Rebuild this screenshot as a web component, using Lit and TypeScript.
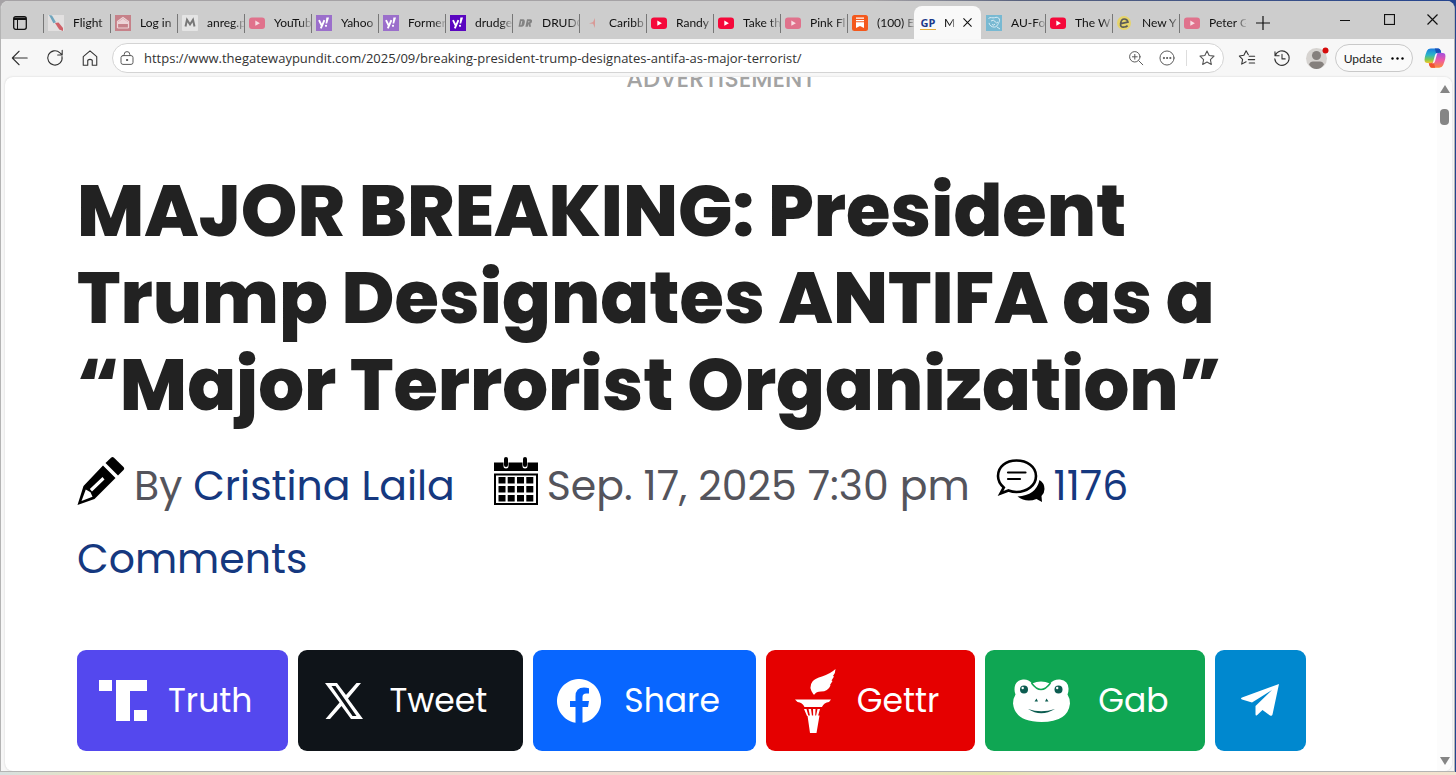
import { LitElement, html, css, svg, nothing, TemplateResult } from "lit";
import { customElement } from "lit/decorators.js";
import { classMap } from "lit/directives/class-map.js";

type Icon = TemplateResult;

const youtube = (faded: boolean): Icon => html`<svg viewBox="0 0 16 16" width="16" height="16">
  <rect x="0" y="2.5" width="16" height="11.5" rx="3" fill=${faded ? "#e0728c" : "#f5083a"} />
  <path d="M6.3 5.6v5.2l4.6-2.6z" fill=${faded ? "#f8dde3" : "#fff"} />
</svg>`;

const yahoo = (color: string): Icon => html`<svg viewBox="0 0 16 16" width="16" height="16">
  <rect width="16" height="16" fill=${color} />
  <path d="M3 5.2l2.6 5.2M8.4 5.2L4.8 13.4" stroke="#fff" stroke-width="1.9" fill="none" />
  <path d="M10.4 2.6h2.6l-1.8 6h-1.6z" fill="#fff" /><circle cx="10" cy="10.8" r="1.1" fill="#fff" />
</svg>`;

const flight = html`<svg viewBox="0 0 16 16" width="16" height="16">
  <rect width="16" height="16" fill="#e2e0e0" />
  <path d="M1 0l3 .6 4 6.600-2.600 1z" fill="#6fa5bd" /><path d="M7 8l3.500-.4 4.500 5.400v3l-3.800-1.400z" fill="#cf6068" />
</svg>`;
const login = html`<svg viewBox="0 0 16 16" width="16" height="16">
  <rect width="16" height="16" fill="#c68189" />
  <path d="M2.500 6.500L8 2.600l5.500 3.900v1h-11zM2.500 8.500h11M2.500 13h11M2.500 8v5M13.500 8v5" fill="none" stroke="#ecd3d6" stroke-width="1.200" />
  <path d="M3 7l5-3.600L13 7z" fill="#ecd3d6" />
</svg>`;
const em = html`<svg viewBox="0 0 16 16" width="16" height="16">
  <rect width="16" height="16" rx="1" fill="#e4e4e4" />
  <path d="M3.500 11.500L5 4.800 8 9.500l3-4.700 1.500 6.700" fill="none" stroke="#777" stroke-width="2" />
</svg>`;
const dr = html`<svg viewBox="0 0 16 16" width="16" height="16">
  <path d="M3 4.200h3.200q2 .3 1.600 3.300-.6 4.300-3.200 4.300H1.500zM10 4.200h3.600q2 .3 1.400 2.500-.4 1.500-1.600 1.800l.6 3.300h-2l-.6-3-.6 3H8.400z" fill="#828282" />
  <path d="M4.800 6l-.9 4.200M12 6l-.3 1.400" stroke="#ccc" stroke-width="1" />
</svg>`;
const carib = html`<svg viewBox="0 0 16 16" width="16" height="16">
  <path d="M11 3L9 7 5 8.500l4 .3L11 13V8z" fill="#d89a97" />
</svg>`;
const substack = html`<svg viewBox="0 0 16 16" width="16" height="16">
  <rect width="16" height="16" rx="2.500" fill="#f4581c" />
  <path d="M4 3.200h8M4 5.600h8" stroke="#fff" stroke-width="1.300" /><path d="M4 7.300h8v5.800L8 10.900l-4 2.200z" fill="#fff" />
</svg>`;
const gp = html`<span class="gp">GP</span>`;
const auf = html`<svg viewBox="0 0 16 16" width="16" height="16">
  <rect width="16" height="16" fill="#78b9d2" />
  <path d="M2.500 3.500c2-2 4 0 6-.8s4-.6 4.800 1.300-.3 3-1 4.500-1.600 3.600-4 3.600-5-1.600-5.300-4.200M5 6q2.500-2 4 .5T12 7M6 9.500q2 1.500 3-.5M11 12l3 2" fill="none" stroke="#d9edf5" stroke-width="1" />
</svg>`;
const ebay = html`<svg viewBox="0 0 16 16" width="16" height="16">
  <circle cx="7" cy="8" r="7" fill="#e6d46a" />
  <path d="M3.800 8.600L11 7.200Q10.400 4 7.300 4T3.600 8.400 7.400 12q2 0 3.200-1.400" fill="none" stroke="#5c5c58" stroke-width="1.700" />
</svg>`;

interface Tab { icon: Icon; label: string; active?: boolean; after?: boolean; }

const tabs: Tab[] = [
  { icon: flight, label: "Flight" },
  { icon: login, label: "Log in" },
  { icon: em, label: "anreg.p" },
  { icon: youtube(true), label: "YouTub" },
  { icon: yahoo("#9b6fcb"), label: "Yahoo" },
  { icon: yahoo("#9b6fcb"), label: "Former" },
  { icon: yahoo("#5a06c0"), label: "drudge" },
  { icon: dr, label: "DRUDG" },
  { icon: carib, label: "Caribb" },
  { icon: youtube(false), label: "Randy" },
  { icon: youtube(false), label: "Take th" },
  { icon: youtube(true), label: "Pink Fl" },
  { icon: substack, label: "(100) E" },
  { icon: gp, label: "M", active: true },
  { icon: auf, label: "AU-Fo", after: true },
  { icon: youtube(false), label: "The W" },
  { icon: ebay, label: "New Y" },
  { icon: youtube(true), label: "Peter G" },
];

const line = (size: number, body: unknown): Icon => html`<svg class="line" viewBox="0 0 20 20" width=${size} height=${size}>${body}</svg>`;

const star = svg`<path d="M10 2.200l2.400 5 5.400.7-4 3.800 1 5.500-4.800-2.700-4.800 2.700 1-5.500-4-3.800 5.400-.7z" />`;

@customElement("browser-tabs")
export class BrowserTabs extends LitElement {
  static styles = css`
    :host { display: flex; height: 38px; background: #cdcdcd; font-family: Lato, "Open Sans", sans-serif; }
    svg { display: block; flex: none; }
    button { border: 0; background: none; padding: 0; font: inherit; color: #111; display: flex; align-items: center; justify-content: center; }
    .line { fill: none; stroke: #111; stroke-width: 1.200; }
    .menu { width: 42px; padding: 5px 4px 0 0; }
    .tabs { display: flex; flex: 0 1 1203px; min-width: 0; }
    .tab { flex: 0 1 67px; min-width: 0; box-sizing: border-box; justify-content: flex-start; gap: 9px; padding: 5px 0 0 5px; font-size: 12px; position: relative; }
    .tab.after { flex-basis: 64px; }
    .tab::before { content: ""; position: absolute; left: 0; top: 13px; bottom: 6px; width: 1px; background: #777; }
    .tab.after::before, .tab.active::before { display: none; }
    .label { flex: 1; min-width: 0; overflow: hidden; white-space: nowrap; text-align: left; -webkit-mask-image: linear-gradient(90deg, #000 70%, transparent 105%); mask-image: linear-gradient(90deg, #000 70%, transparent 105%); }
    .tab.active { background: #f9f9f9; border-radius: 8px 8px 0 0; margin-top: 5px; padding: 0 9px 0 6px; gap: 8px; }
    .gp { flex: none; width: 16px; font: bold 11px/13px "Open Sans", sans-serif; color: #1d3a8a; border-bottom: 1px solid #e0a93a; }
    .new { width: 34px; padding-top: 5px; }
    .space { flex: 1; }
    .win { width: 44px; padding-bottom: 1px; }
    .close { width: 43px; }
  `;
  render() {
    return html`
      <button class="menu" aria-label="Tab actions">
        <svg viewBox="0 0 14 14" width="14" height="14"><rect x=".7" y=".7" width="12.600" height="12.600" rx="2" fill="none" stroke="#111" stroke-width="1.300" /><path d="M1 1.500h12v2.500H1z" fill="#111" /><path d="M4.500 4v9" stroke="#111" /></svg>
      </button>
      <div class="tabs" role="tablist">
        ${tabs.map((t) => html`<button role="tab" class=${classMap({ tab: true, active: !!t.active, after: !!t.after })}>
          ${t.icon}<span class="label">${t.label}</span>
          ${t.active ? html`<svg class="line" viewBox="0 0 10 10" width="9" height="9"><path d="M.5.5l9 9M9.500.5l-9 9" /></svg>` : nothing}
        </button>`)}
      </div>
      <button class="new" aria-label="New tab"><svg class="line" viewBox="0 0 14 14" width="14" height="14"><path d="M7 0v14M0 7h14" /></svg></button>
      <div class="space"></div>
      <button class="win" aria-label="Minimize"><svg class="line" viewBox="0 0 10 10" width="10" height="10"><path d="M0 5.500h10" /></svg></button>
      <button class="win" aria-label="Maximize"><svg class="line" viewBox="0 0 11 11" width="11" height="11"><rect x=".5" y=".5" width="10" height="10" /></svg></button>
      <button class="win close" aria-label="Close"><svg class="line" viewBox="0 0 11 11" width="11" height="11"><path d="M.5.5l10 10M10.500.5l-10 10" /></svg></button>
    `;
  }
}

@customElement("browser-toolbar")
export class BrowserToolbar extends LitElement {
  static styles = css`
    :host { display: flex; align-items: center; height: 38px; background: #f7f7f7; padding: 0 8px 0 1px; font-family: Lato, "Open Sans", sans-serif; }
    svg { display: block; flex: none; }
    button { border: 0; background: none; padding: 0; font: inherit; color: #222; display: flex; align-items: center; justify-content: center; }
    .line { fill: none; stroke: #333; stroke-width: 1.200; stroke-linejoin: round; stroke-linecap: round; }
    .nav { width: 35px; height: 30px; }
    .bar { flex: 1; min-width: 0; box-sizing: border-box; height: 30px; margin-left: 5px; border: 1px solid #d4d4d4; border-radius: 15px; background: #fff; display: flex; align-items: center; padding: 0 1px 0 6px; }
    .url { flex: 1; min-width: 0; border: 0; outline: 0; padding: 0; margin-left: 9px; background: none; font: 13px "Open Sans", "Noto Sans", sans-serif; color: #333; }
    .small { width: 31px; height: 28px; }
    .bar .line { stroke: #555; }
    .rule { width: 1px; height: 16px; background: #ddd; margin: 0 4px; }
    .tools { display: flex; align-items: center; margin-left: 5px; }
    .update { box-sizing: border-box; height: 28px; width: 78px; border: 1px solid #c9c9c9; border-radius: 14px; gap: 9px; font-size: 12px; background: #fafafa; margin: 0 10px 0 1px; }
    .copilot { width: 23px; }
  `;
  render() {
    return html`
      <button class="nav" aria-label="Back">${line(18, svg`<path d="M18 10H2M9 2.500L1.500 10 9 17.500" />`)}</button>
      <button class="nav" aria-label="Refresh">${line(18, svg`<path d="M17.800 8.500A8 8 0 1 1 15.500 4.200L18 6.600M18 1.500v5.100h-5" />`)}</button>
      <button class="nav" aria-label="Home">${line(18, svg`<path d="M2.500 8.500L10 2l7.500 6.500V18H12.500v-5.500q-2.500-2-5 0V18h-5z" />`)}</button>
      <form class="bar">
        ${line(16, svg`<rect x="2.500" y="7" width="15" height="11" rx="2.500" /><path d="M6.500 7V5.500Q6.500 2 10 2t3.500 3.500V7" /><circle cx="10" cy="12.500" r=".8" fill="#333" />`)}
        <input class="url" type="text" aria-label="Address" value="https://www.thegatewaypundit.com/2025/09/breaking-president-trump-designates-antifa-as-major-terrorist/" />
        <button type="button" class="small" aria-label="Zoom">${line(16, svg`<circle cx="8.500" cy="8.500" r="6.500" /><path d="M13.500 13.500L18.500 18.500M8.500 5.500v6M5.500 8.500h6" />`)}</button>
        <button type="button" class="small" aria-label="More page actions">${line(16, svg`<circle cx="10" cy="10" r="8.800" /><g fill="#555"><circle cx="6" cy="10" r=".7" /><circle cx="10" cy="10" r=".7" /><circle cx="14" cy="10" r=".7" /></g>`)}</button>
        <span class="rule"></span>
        <button type="button" class="small" aria-label="Add to favorites">${line(18, star)}</button>
      </form>
      <div class="tools">
        <button class="nav" aria-label="Favorites">${line(18, svg`<path d="M11.500 6.500L9 2 6.500 7 1.500 7.800l3.600 3.700-1 5.300L9 14.200M12.500 8h6M11.500 11.800h7M12.500 15.500h6" />`)}</button>
        <button class="nav" aria-label="History">${line(18, svg`<path d="M2.200 3v4.500h4.600M2.500 7.200A8 8 0 1 1 2 11M10 6v5h3.500" />`)}</button>
        <button class="nav" aria-label="Profile">
          <svg viewBox="0 0 24 24" width="24" height="24"><circle cx="11.500" cy="12.500" r="10.500" fill="#d6d3d0" /><circle cx="11.500" cy="9.500" r="4.500" fill="#85807d" /><path d="M4 18.500Q5 15.500 8 15.500h7q3 0 4 3-3 4.500-7.500 4.500T4 18.500z" fill="#85807d" /><circle cx="20.500" cy="4.500" r="3" fill="#d60b0b" /></svg>
        </button>
        <button class="update"><span>Update</span><svg viewBox="0 0 13 3" width="13" height="3"><circle cx="1.500" cy="1.500" r="1.200" /><circle cx="6.500" cy="1.500" r="1.200" /><circle cx="11.500" cy="1.500" r="1.200" /></svg></button>
        <button class="copilot" aria-label="Copilot">
          <svg viewBox="0 0 24 24" width="22" height="22">
            <defs>
              <linearGradient id="ca" x1="0" y1="0" x2="0" y2="1"><stop offset="0" stop-color="#1b7be0" /><stop offset=".45" stop-color="#2bb5c9" /><stop offset=".75" stop-color="#7bc950" /><stop offset="1" stop-color="#f7c72c" /></linearGradient>
              <linearGradient id="cb" x1="0" y1="0" x2="0" y2="1"><stop offset="0" stop-color="#a24fe0" /><stop offset=".5" stop-color="#ee5aa5" /><stop offset="1" stop-color="#fb8a3c" /></linearGradient>
            </defs>
            <path d="M7.500 1.500h8q1.800 0 2.500 2l.8 2.800h-2.600q-2 0-2.600 2l-2 7q-.7 2.200-3 2.200H3.500Q.6 17.500.6 14q0-2.500 1-5.500l1.600-4.500Q4.300 1.500 7.500 1.500z" fill="url(#ca)" />
            <path d="M16.500 22.500h-8q-1.800 0-2.500-2l-.8-2.800h2.600q2 0 2.600-2l2-7q.7-2.200 3-2.200h5.100q2.900 0 2.900 3.500 0 2.500-1 5.500l-1.600 4.500q-1.100 2.500-4.300 2.500z" fill="url(#cb)" />
            <path d="M15.500 1.500q1.800 0 2.500 2l.8 2.800h-2.600q-2 0-2.600 2L11.800 1.500z" fill="#174fb8" />
            <path d="M8.500 22.500q-1.800 0-2.500-2l-.8-2.800h2.600q2 0 2.600-2l1.800 6.800z" fill="#f05330" />
            <path d="M10 16l2-7.400q.6-2 2.800-2.400L14 8.400l-2 7.400q-.6 2-2.800 2.400z" fill="#f7f7f7" />
          </svg>
        </button>
      </div>
    `;
  }
}

const pencil = html`<svg class="glyph" viewBox="0 0 48 48" width="48" height="48">
  <path fill-rule="evenodd" d="M26 8.500L38.500 21 17.500 42 .5 48 6.500 29zM8.800 32.500L4.500 44l11-4.200-2-4.600zM12.800 32l2.200 2.500L27.500 22.500 25.500 20z" />
  <path d="M28.500 6L34 .8q1.500-1.400 3 0L46.500 10q1.400 1.500 0 3L41 18.500z" />
</svg>`;
const calendar = html`<svg class="glyph" viewBox="0 0 44 48" width="44" height="48">
  <path d="M0 5.500h9.500V9q0 2.500 2.500 2.500T14.500 9V5.500h14V9q0 2.500 2.500 2.500T33.500 9V5.500H44V14H0z" /><rect x="10" y="0" width="4" height="10" rx="2" /><rect x="29" y="0" width="4" height="10" rx="2" />
  <path fill-rule="evenodd" d="M0 16.500h44V48H0zM2 18.500V46h40V18.500z" />
  ${[20, 29, 38].map((y) => [4.500, 13.700, 23, 32.300].map((x) => svg`<rect x=${x} y=${y} width="7" height="6.500" />`))}
</svg>`;
const comments = html`<svg class="glyph" viewBox="0 0 49 48" width="49" height="48">
  <path d="M43.500 23Q48.500 26 48.500 32 48.500 36 45.500 39L46 45 40.500 42Q30 46 21.500 39.500 40 38.500 43.500 23z" />
  <path d="M20.500 3.500C31 3.500 40 9.500 40 19S31 35 20.500 35q-4 0-8-1.500L4.500 36.500 7.800 30.500Q2 25.500 2 19C2 9.500 10 3.500 20.500 3.500z" fill="#fff" stroke="#000" stroke-width="2.600" />
  <path d="M12 15.500h17.500M12 22h12" stroke="#000" stroke-width="2.200" stroke-linecap="round" />
</svg>`;

const shares: { name: string; label: string; icon: Icon }[] = [
  { name: "truth", label: "Truth", icon: html`<svg viewBox="0 0 48 41" width="48" height="41"><path d="M0 0h13v11H0zM17 0h31v11H31v30H17zM35 30h13v11H35z" /></svg>` },
  { name: "tweet", label: "Tweet", icon: html`<svg viewBox="0 0 38 36" width="38" height="36"><path fill-rule="evenodd" d="M0 0h12l9 12L31.500 0H36L23 15.500 38 36H26L16.500 23 5 36H.5l14-16.500zM6.500 3L27.500 33h4L10.500 3z" /></svg>` },
  { name: "share", label: "Share", icon: html`<svg viewBox="0 0 44 44" width="44" height="44"><path d="M18.500 43.700A22 22 0 1 1 25.500 43.700V28h5.500l1-6H25.500v-4q0-3.500 3.800-3.500H32V9.200Q29.500 8.600 27 8.600q-8.500 0-8.500 8.900V22H13v6h5.500z" /></svg>` },
  { name: "gettr", label: "Gettr", icon: html`<svg viewBox="-8 0 49 64" width="49" height="64"><path d="M18.500 25.500Q13 18 17.500 12.500 20 9.500 27 7.500 35 5 40.500 0q0 4-2.500 7l1 .5-2.500 4 1 .5-2.500 4 .5.500Q33 22.500 26 22.500q-5 0-6.500 3z" /><path d="M0 30.500h36l-2 2.500q-5 .5-7 5H9.500q-2-4.500-7-5zM9 40h2.500l2 7H12zM13.500 40h2.500l1 7h-2zM18 40h2.500l-.3 7h-2zM22.500 40H25l-2 7h-2zM12.500 46.500h12L21.500 64h-6.500z" /></svg>` },
  { name: "gab", label: "Gab", icon: html`<svg viewBox="0 0 57 44" width="57" height="44"><path d="M19 4.500Q28 .5 37 4.500 41 0 47 .5q9 1.500 8.500 10 0 3-1 5 2.500 4 2.500 9Q55 43 28.500 43T0 24.500q0-5 2.500-9-1-2-1-5Q1.500 1.500 10 .5 15.500 0 19 4.500z" /><path d="M18.500 4Q28 17 37.500 4" fill="none" stroke="#0fa653" stroke-width="1.500" /><g fill="#0c5c50"><circle cx="11" cy="10.500" r="4" /><circle cx="45.500" cy="10.500" r="4" /><path d="M21.500 22.500l2-3 1.500 3zM32 22.500l1.500-3 2 3zM15 30q13 4.500 27 0-14 8.500-27 0z" /></g><circle cx="9.700" cy="9" r="1.200" /><circle cx="44.200" cy="9" r="1.200" /></svg>` },
  { name: "telegram", label: "", icon: html`<svg viewBox="0 0 38 33" width="38" height="33"><path d="M38 0L31.500 30.500q-.5 2-2.500 1L21.500 26 16 31.300q-1.500.7-1.500-1V22L31 6 11 18.500 1 15.500q-2-1 0-2z" /></svg>` },
];

@customElement("article-view")
export class ArticleView extends LitElement {
  static styles = css`
    :host { display: block; flex: 1; min-width: 0; overflow: hidden; padding: 0 72px 18px; font-family: Poppins, Inter, sans-serif; }
    svg { flex: none; }
    a { color: #15387f; text-decoration: none; }
    .ad { margin: -10px 0 0; text-align: center; font-size: 24px; line-height: 24px; font-weight: 500; color: #a3a3a3; }
    h1 { margin: 76px 0 0; font-size: 72px; line-height: 87px; font-weight: 800; color: #222; }
    .meta { margin: 21px 0 0; font-size: 41px; line-height: 73px; color: #54545c; }
    .author { margin-right: 28px; }
    .date { margin-right: 15px; }
    .glyph { margin-right: 9px; vertical-align: -5px; fill: #000; }
    .share { display: flex; gap: 10px; margin-top: 55px; }
    .button { display: flex; align-items: center; height: 101px; border-radius: 9px; color: #fff; font-size: 33px; }
    .icon { width: 91px; display: flex; justify-content: center; }
    .icon svg { display: block; fill: #fff; }
    .text { padding-right: 36px; }
    .truth { background: #5448ee; }
    .tweet { background: #0f1419; }
    .facebook { background: #0866ff; }
    .gettr { background: #e50000; }
    .gab { background: #0fa653; }
    .gab .icon { width: 113px; }
    .telegram { background: #0088cf; }
  `;
  render() {
    return html`
      <p class="ad">ADVERTISEMENT</p>
      <h1>MAJOR BREAKING: President<br />Trump Designates ANTIFA as a<br />“Major Terrorist Organization”</h1>
      <p class="meta">
        <span class="author">${pencil}By <a href="#author">Cristina Laila</a></span>
        <span class="date">${calendar}Sep. 17, 2025 7:30 pm</span>
        ${comments}<a href="#comments">1176<br />Comments</a>
      </p>
      <div class="share">
        ${shares.map((s) => html`<a href="#${s.name}" aria-label=${s.label || "Telegram"} class="button ${s.name === "share" ? "facebook" : s.name}">
          <span class="icon">${s.icon}</span>${s.label ? html`<span class="text">${s.label}</span>` : nothing}
        </a>`)}
      </div>
    `;
  }
}

@customElement("app-root")
export class AppRoot extends LitElement {
  static styles = css`
    :host { display: flex; flex-direction: column; box-sizing: border-box; min-height: 100vh; padding: 1px 1px 3px 0; background: linear-gradient(90deg, #d8e0e0, #e6e4c0 7%, #efdcd2 20%, #f0dcd0 55%, #e8e4b0 68%, #eedfd0 75%, #f3e2ce) bottom / 100% 3px no-repeat, linear-gradient(90deg, #a5a2a5 60%, #59627e 70%, #24448f); }
    .window { flex: 1; display: flex; flex-direction: column; box-sizing: border-box; border: 1px solid #b4b4b4; border-top: 0; border-radius: 8px 8px 0 0; overflow: hidden; background: #f7f7f7; }
    .page { flex: 1; display: flex; margin: 0 2px 0 4px; border-radius: 8px; overflow: hidden; background: #fff; box-shadow: 0 0 2px #ccc; }
    .scroll { width: 15px; background: #fcfcfc; display: flex; flex-direction: column; align-items: center; justify-content: space-between; padding: 8px 0 6px; box-sizing: border-box; }
    .top { display: flex; flex-direction: column; align-items: center; gap: 16px; }
    .thumb { width: 9px; height: 16px; border-radius: 4px; background: #858585; }
    .scroll svg { display: block; fill: #858585; }
  `;
  render() {
    return html`<div class="window">
      <browser-tabs></browser-tabs>
      <browser-toolbar></browser-toolbar>
      <main class="page">
        <article-view></article-view>
        <div class="scroll">
          <div class="top"><svg viewBox="0 0 10 8" width="10" height="8"><path d="M5 0l5 8H0z" /></svg><div class="thumb"></div></div>
          <svg viewBox="0 0 10 8" width="10" height="8"><path d="M5 8l5-8H0z" /></svg>
        </div>
      </main>
    </div>`;
  }
}
